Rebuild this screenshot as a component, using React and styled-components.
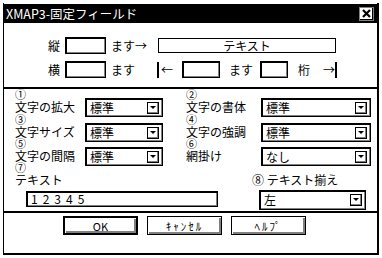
import React from 'react';
import styled, { createGlobalStyle } from 'styled-components';

const GlobalStyle = createGlobalStyle`
  html, body { margin: 0; padding: 0; background: #fff; }
  body {
    font-family: "Noto Sans CJK JP", "DejaVu Sans", sans-serif;
    color: #000;
  }
`;

// the dialog frame: thin edge left, heavy shadow on right and bottom
const Window = styled.div`
  box-sizing: border-box;
  width: 376px;
  height: 252px;
  margin: 3px 0 0 3px;
  padding-top: 1px;
  border-left: 1px solid #000;
  border-right: 2px solid #000;
  border-bottom: 2px solid #000;
  display: flex;
  flex-direction: column;
  background: #fff;
`;

const TitleBar = styled.div`
  height: 19px;
  background: #000;
  display: flex;
  align-items: center;
  padding-left: 2px;
`;

const Title = styled.span`
  color: #fff;
  font-size: 12.5px;
  line-height: 19px;
  white-space: nowrap;
`;

const CloseBox = styled.div`
  box-sizing: border-box;
  margin-left: auto;
  margin-right: 3px;
  width: 15px;
  height: 14px;
  background: #fff;
  border: 1px solid #808080;
  box-shadow: inset -1px -1px 0 #000;
  display: flex;
  align-items: center;
  justify-content: center;
`;

const TopSection = styled.div`
  box-sizing: border-box;
  height: 64px;
  padding: 14px 0 0 44px;
  display: flex;
  flex-direction: column;
  gap: 7px;
`;

const FieldRow = styled.div`
  display: flex;
  align-items: center;
  gap: 5px;
  height: 17px;
`;

const Text = styled.span`
  box-sizing: border-box;
  width: ${p => p.$w}px;
  padding-left: ${p => p.$pl || 0}px;
  font-size: 12px;
  line-height: 17px;
  white-space: nowrap;
`;

const Entry = styled.div`
  box-sizing: border-box;
  width: ${p => p.$w}px;
  height: ${p => p.$h || 17}px;
  margin-left: ${p => p.$ml || 0}px;
  margin-top: ${p => p.$mt || 0}px;
  border: 1px solid #000;
  box-shadow: inset 1px 1px 0 #000, inset -1px -1px 0 #808080;
  background: #fff;
  font-size: 12px;
  line-height: 14px;
  padding-left: 4px;
  letter-spacing: ${p => p.$ls || 0}px;
`;

const TextBox = styled.div`
  box-sizing: border-box;
  width: 178px;
  height: 15px;
  border: 1px solid #000;
  font-size: 12px;
  line-height: 13px;
  text-align: center;
`;

const BarArrow = styled.span`
  box-sizing: border-box;
  width: ${p => p.$w}px;
  height: 16px;
  font-size: 12px;
  line-height: 16px;
  padding-left: ${p => (p.$right ? 0 : 2)}px;
  border-left: ${p => (p.$right ? 'none' : '2px solid #000')};
  border-right: ${p => (p.$right ? '2px solid #000' : 'none')};
  text-align: ${p => (p.$right ? 'right' : 'left')};
`;

const Divider = styled.div`
  height: 2px;
  background: #000;
`;

const OptionGrid = styled.div`
  box-sizing: border-box;
  height: 73px;
  padding-left: 11px;
  display: grid;
  grid-template-columns: 148px 185px;
  grid-template-rows: 25px 24px 24px;
  column-gap: 23px;
`;

const Option = styled.div`
  display: grid;
  grid-template-columns: ${p => p.$lw}px 1fr;
  align-items: start;
`;

const Label = styled.div`
  display: flex;
  flex-direction: column;
`;

const Num = styled.span`
  height: 10px;
  font-size: 11px;
  line-height: 10px;
`;

const Caption = styled.span`
  margin-top: 1px;
  font-size: 12px;
  line-height: 13px;
  white-space: nowrap;
`;

const Select = styled.div`
  box-sizing: border-box;
  width: ${p => (p.$w ? `${p.$w}px` : 'auto')};
  height: ${p => p.$h || 19}px;
  margin-top: ${p => (p.$mt === undefined ? 9 : p.$mt)}px;
  margin-left: ${p => p.$ml || 0}px;
  border: 1px solid #000;
  box-shadow: inset 1px 1px 0 #000, inset -1px -1px 0 #808080;
  display: flex;
  align-items: center;
  padding: 0 3px 0 4px;
  font-size: 12px;
`;

const Value = styled.span`
  flex: 1;
  line-height: 14px;
`;

const DropBtn = styled.div`
  box-sizing: border-box;
  width: 12px;
  height: 12px;
  border: 1px solid #000;
  box-shadow: inset -1px -1px 0 #808080;
  background: #fff;
  display: flex;
  align-items: center;
  justify-content: center;
`;

const TextSection = styled.div`
  box-sizing: border-box;
  height: 49px;
  padding-left: 11px;
  display: grid;
  grid-template-columns: 237px 1fr;
`;

const Column = styled.div`
  display: flex;
  flex-direction: column;
  align-items: flex-start;
`;

const ButtonBar = styled.div`
  flex: 1;
  display: flex;
  align-items: flex-start;
  gap: 9px;
  padding: 3px 0 0 59px;
`;

const Button = styled.div`
  box-sizing: border-box;
  width: 75px;
  height: 19px;
  border: ${p => (p.$default ? 2 : 1)}px solid #000;
  box-shadow: inset 1px 1px 0 #fff, inset -2px -2px 0 #808080;
  background: #fff;
  display: flex;
  align-items: center;
  justify-content: center;
  font-size: 11px;
  letter-spacing: ${p => p.$ls || 0}px;
  white-space: nowrap;
`;

const Arrow = () => (
  <svg width="6" height="4" viewBox="0 0 6 4">
    <polygon points="0,0 6,0 3,3" fill="#000" />
  </svg>
);

const Dropdown = ({ value, ...rest }) => (
  <Select {...rest}>
    <Value>{value}</Value>
    <DropBtn>
      <Arrow />
    </DropBtn>
  </Select>
);

const options = [
  { n: '①', label: '文字の拡大', value: '標準' },
  { n: '②', label: '文字の書体', value: '標準' },
  { n: '③', label: '文字サイズ', value: '標準' },
  { n: '④', label: '文字の強調', value: '標準' },
  { n: '⑤', label: '文字の間隔', value: '標準' },
  { n: '⑥', label: '網掛け', value: 'なし' },
];

export default function App() {
  return (
    <>
      <GlobalStyle />
      <Window>
        <TitleBar>
          <Title>XMAP3-固定フィールド</Title>
          <CloseBox>
            <svg width="9" height="9" viewBox="0 0 9 9">
              <path d="M1 1 L8 8 M8 1 L1 8" stroke="#000" strokeWidth="2.2" />
            </svg>
          </CloseBox>
        </TitleBar>

        <TopSection>
          <FieldRow>
            <Text $w={12}>縦</Text>
            <Entry $w={41} />
            <Text $w={42}>ます→</Text>
            <TextBox>テキスト</TextBox>
          </FieldRow>
          <FieldRow>
            <Text $w={12}>横</Text>
            <Entry $w={41} />
            <Text $w={41}>ます</Text>
            <BarArrow $w={20}>←</BarArrow>
            <Entry $w={38} />
            <Text $w={30} $pl={4}>ます</Text>
            <Entry $w={28} />
            <Text $w={22} $pl={5}>桁</Text>
            <BarArrow $w={17} $right>→</BarArrow>
          </FieldRow>
        </TopSection>

        <Divider />

        <OptionGrid>
          {options.map((o, i) => (
            <Option key={o.n} $lw={i % 2 === 0 ? 70 : 75}>
              <Label>
                <Num>{o.n}</Num>
                <Caption>{o.label}</Caption>
              </Label>
              <Dropdown value={o.value} />
            </Option>
          ))}
        </OptionGrid>

        <TextSection>
          <Column>
            <Num>⑦</Num>
            <Caption>テキスト</Caption>
            <Entry $w={192} $h={16} $ml={11} $mt={5} $ls={5}>12345</Entry>
          </Column>
          <Column>
            <Num />
            <Caption>⑧ テキスト揃え</Caption>
            <Dropdown value="左" $w={107} $h={20} $ml={7} $mt={4} />
          </Column>
        </TextSection>

        <Divider />

        <ButtonBar>
          <Button $default>OK</Button>
          <Button $ls={2}>ｷｬﾝｾﾙ</Button>
          <Button $ls={2}>ﾍﾙﾌﾟ</Button>
        </ButtonBar>
      </Window>
    </>
  );
}
